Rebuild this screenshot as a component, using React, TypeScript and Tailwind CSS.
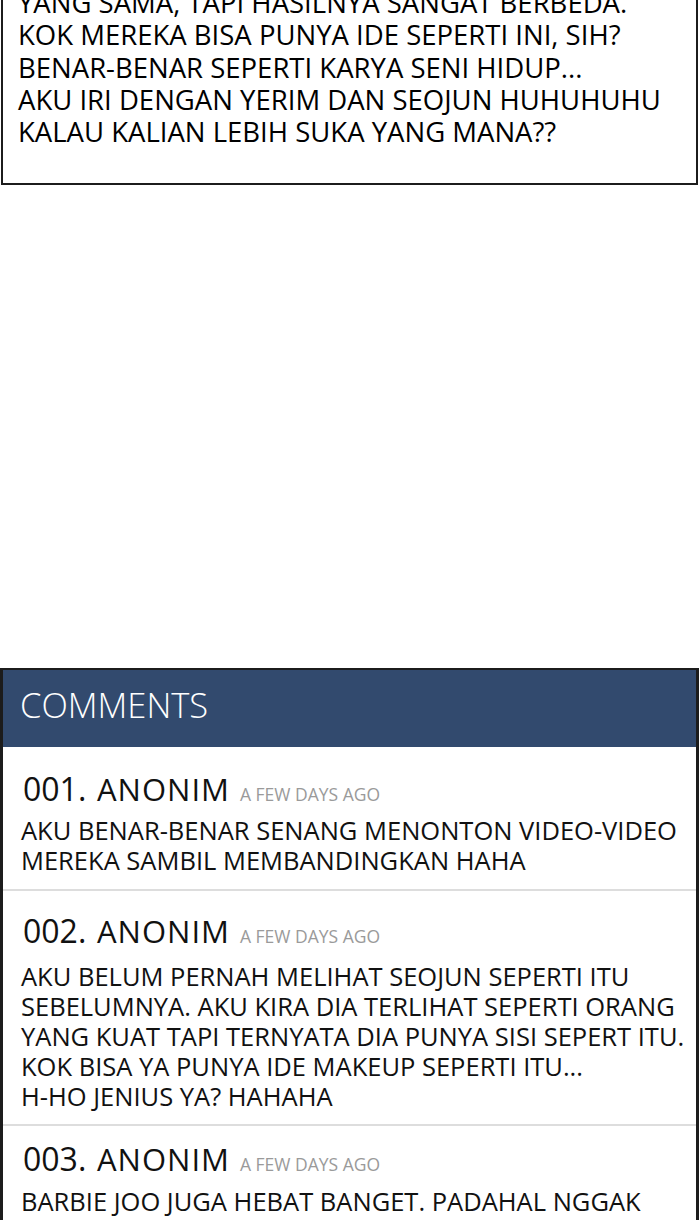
import React from "react";

const topLines = [
  "YANG SAMA, TAPI HASILNYA SANGAT BERBEDA.",
  "KOK MEREKA BISA PUNYA IDE SEPERTI INI, SIH?",
  "BENAR-BENAR SEPERTI KARYA SENI HIDUP...",
  "AKU IRI DENGAN YERIM DAN SEOJUN HUHUHUHU",
  "KALAU KALIAN LEBIH SUKA YANG MANA??",
];

const comments = [
  {
    no: "001.",
    lines: ["AKU BENAR-BENAR SENANG MENONTON VIDEO-VIDEO", "MEREKA SAMBIL MEMBANDINGKAN HAHA"],
    pad: "pt-[24px] pb-[14px]",
    mt: "mt-[8px]",
  },
  {
    no: "002.",
    lines: [
      "AKU BELUM PERNAH MELIHAT SEOJUN SEPERTI ITU",
      "SEBELUMNYA. AKU KIRA DIA TERLIHAT SEPERTI ORANG",
      "YANG KUAT TAPI TERNYATA DIA PUNYA SISI SEPERT ITU.",
      "KOK BISA YA PUNYA IDE MAKEUP SEPERTI ITU...",
      "H-HO JENIUS YA? HAHAHA",
    ],
    pad: "pt-[22px] pb-[13px]",
    mt: "mt-[12px]",
  },
  {
    no: "003.",
    lines: ["BARBIE JOO JUGA HEBAT BANGET. PADAHAL NGGAK"],
    pad: "pt-[15px] pb-[20px]",
    mt: "mt-[9px]",
  },
];

const font = { fontFamily: '"Open Sans", "Noto Sans", sans-serif' };

export default function App() {
  return (
    <div className="w-[700px] h-[1220px] overflow-hidden bg-white" style={font}>
      <div className="-mt-[18px] ml-px w-[697px] border-2 border-[#1c1c1c] bg-white pl-[15px] pt-[3px] pb-[35px] text-[27.5px] leading-[32.3px] text-black">
        {topLines.map((l) => (
          <div key={l} className="whitespace-nowrap">{l}</div>
        ))}
      </div>

      <div className="h-[483px]" />

      <div className="w-[699px] border-[3px] border-t-2 border-[#1c1c1c] bg-white">
        <div className="h-[77px] bg-[#324a6e] pl-[17px] pt-[15px] text-[34.5px] leading-[40px] font-light text-white">
          COMMENTS
        </div>
        {comments.map((c, i) => (
          <div key={c.no} className={`${c.pad} ${i > 0 ? "border-t-[2px] border-[#dddddd]" : ""} pl-[18px]`}>
            <div className="flex items-baseline whitespace-nowrap leading-[36px] text-[#111]">
              <span className="w-[76px] pl-[2px] text-[32px]">{c.no}</span>
              <span className="text-[31px] tracking-[1px]">ANONIM</span>
              <span className="ml-[10px] text-[17.5px] leading-none text-[#9a9a9a]">A FEW DAYS AGO</span>
            </div>
            <div className={`${c.mt} text-[25.5px] leading-[30px] text-[#111]`}>
              {c.lines.map((l) => (
                <div key={l} className="whitespace-nowrap">{l}</div>
              ))}
            </div>
          </div>
        ))}
      </div>
    </div>
  );
}
